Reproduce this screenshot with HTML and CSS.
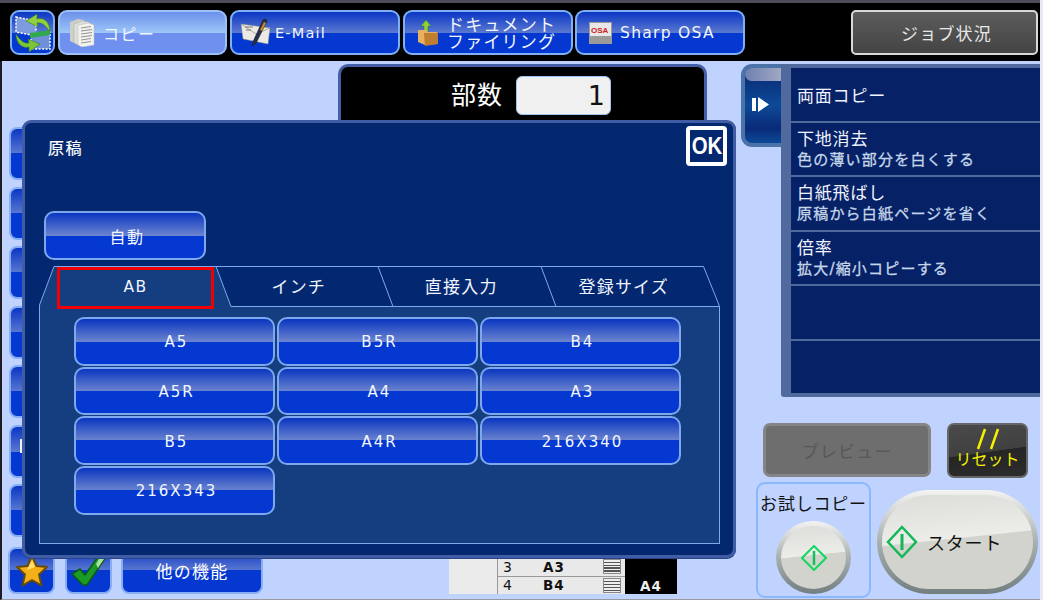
FILE: index.html
```html
<!DOCTYPE html>
<html lang="ja">
<head>
<meta charset="utf-8">
<title>コピー</title>
<link rel="stylesheet" href="styles.css">
</head>
<body>
<div class="app">
  <header class="topbar">
    <button class="nav swap">
      <svg width="41" height="41" viewBox="0 0 41 41">
        <path d="M4 5 L24 9 V24 L4 20Z" fill="#7f9be0" stroke="#fff" stroke-width="1.5" stroke-dasharray="2 1.5"/>
        <path d="M19 22 L38 20 V37 L19 37Z" fill="#6f8fd8" stroke="#fff" stroke-width="1.5" stroke-dasharray="2 1.5"/>
        <path d="M18 21 L38 18 V23 L18 26Z" fill="#2fa84e"/>
        <path d="M38 20 C38 9 31 5 25 7 L25 2 L14 9 L26 15 L25 11 C30 10 34 14 38 20Z" fill="#8fd03c" stroke="#2f7a2a" stroke-width=".6"/>
        <path d="M4 22 C4 32 11 37 17 35 L17 40 L28 32 L16 27 L17 31 C12 32 8 28 4 22Z" fill="#7cc534" stroke="#2f7a2a" stroke-width=".6"/>
      </svg>
    </button>
    <button class="nav app-btn active">
      <svg class="ico ico-copy" width="25" height="28" viewBox="0 0 25 28">
        <path d="M0 3 L8 0 L14 1 V22 L4 24 L0 22Z" fill="#cfcfca"/>
        <path d="M4 5 L12 2 L19 3 V24 L8 26 L4 24Z" fill="#dededa" stroke="#a8a8a4" stroke-width=".5"/>
        <path d="M8 6 L19 4 L24 6 V26 L12 28 L8 26Z" fill="#f2f2ee" stroke="#b8b8b4" stroke-width=".5"/>
        <path d="M11 9 L21 7.500 M11 12 L22 10.500 M11 15 L22 13.500 M11 18 L22 16.500 M11 21 L21 19.500 M11 24 L21 22.500" stroke="#888" stroke-width=".9"/>
      </svg>
      <span class="lbl lbl-copy">コピー</span>
    </button>
    <button class="nav app-btn">
      <svg class="ico ico-mail" width="30" height="27" viewBox="0 0 30 27">
        <path d="M0 5 L29 9 L27 25 L2 20Z" fill="#eceae2" stroke="#8a8a80" stroke-width=".5"/>
        <path d="M0 5 L15 15 L29 9" fill="none" stroke="#9a9a90" stroke-width=".8"/>
        <path d="M4 8 H12 M5 11 H10" stroke="#777" stroke-width="1"/>
        <path d="M25 0 L22 1 L12 23 L11 27 L15 24 L26 2Z" fill="#27304a" stroke="#1a2038" stroke-width=".8"/>
        <path d="M23 3 L19 11 L21 12 L25 4Z" fill="#c98a24"/>
      </svg>
      <span class="lbl">E-Mail</span>
    </button>
    <button class="nav app-btn">
      <svg class="ico ico-folder" width="22" height="26" viewBox="0 0 22 26">
        <path d="M9 0 L14 6 H11 V12 H7 V6 H4Z" fill="#8fd03c" stroke="#3a7a2a" stroke-width=".5"/>
        <path d="M1 10 H9 L11 12 H20 V24 L8 25 L1 22Z" fill="#e8b060"/>
        <path d="M7 13 L21 13 V24 L8 26Z" fill="#c07e30"/>
      </svg>
      <span class="lbl lbl-two"><span class="line">ドキュメント</span><span class="line">ファイリング</span></span>
    </button>
    <button class="nav app-btn osa">
      <svg class="ico ico-osa" width="23" height="22" viewBox="0 0 23 22">
        <rect width="23" height="22" fill="#9a9a9a"/>
        <rect x="1" y="1" width="21" height="13" fill="#e8e8e8"/>
        <text x="2" y="11" class="osa-text">OSA</text>
      </svg>
      <span class="lbl lbl-osa">Sharp OSA</span>
    </button>
    <button class="job">ジョブ状況</button>
  </header>

  <main class="main">
    <section class="rail">
      <div class="side-list">
        <div class="side"></div>
        <div class="side"></div>
        <div class="side"></div>
        <div class="side"></div>
        <div class="side"></div>
        <div class="side"><i class="side-mark"></i></div>
        <div class="side"></div>
      </div>
      <div class="shortcuts">
        <button class="short sq">
          <svg width="34" height="34" viewBox="0 0 34 34"><path d="M17 2 L21.5 12 L32 13 L24 20.5 L26.5 31.5 L17 26 L7.5 31.5 L10 20.5 L2 13 L12.500 12Z" fill="#f4b018" stroke="#6a4a08" stroke-width="2" stroke-linejoin="round"/><path d="M17 6 L20 13 L12 16Z" fill="#ffe070"/></svg>
        </button>
        <button class="short sq">
          <svg width="36" height="30" viewBox="0 0 36 30"><path d="M1 18 L9 13 L14 19 L27 1 L35 1 L16 29 L12 29Z" fill="#1c9a28" stroke="#0c5a14" stroke-width="1.500" stroke-linejoin="round"/><path d="M28 3 L33 3 L27 12 L25 8Z" fill="#a8e0a0"/></svg>
        </button>
        <button class="short more">他の機能</button>
      </div>
    </section>

    <section class="center">
      <div class="count">
        <span class="count-label">部数</span>
        <span class="count-box">1</span>
      </div>
      <div class="strip">
        <div class="strip-blank"></div>
        <div class="strip-table">
          <div class="strip-row"><span class="n">3</span><b>A3</b><i class="tray"></i></div>
          <div class="strip-row"><span class="n">4</span><b>B4</b><i class="tray"></i></div>
        </div>
        <div class="strip-out">A4</div>
      </div>
    </section>

    <section class="right">
      <div class="panel">
        <div class="handle">
          <span class="shine"></span>
          <svg width="17" height="15" viewBox="0 0 17 15"><rect x="0" y="1" width="4" height="13" fill="#fff"/><path d="M6 0 L17 7.500 L6 15Z" fill="#fff"/></svg>
        </div>
        <ul class="features">
          <li>両面コピー</li>
          <li>下地消去<small>色の薄い部分を白くする</small></li>
          <li>白紙飛ばし<small>原稿から白紙ページを省く</small></li>
          <li>倍率<small>拡大/縮小コピーする</small></li>
          <li></li>
          <li></li>
        </ul>
      </div>
      <div class="row-a">
        <button class="preview">プレビュー</button>
        <button class="reset">
          <svg width="26" height="22" viewBox="0 0 26 22"><path d="M10 1 L3 21 M23 1 L16 21" stroke="#f4f000" stroke-width="2.500"/></svg>
          <span>リセット</span>
        </button>
      </div>
      <div class="row-b">
        <div class="trial">
          <span class="trial-label">お試しコピー</span>
          <button class="round-btn">
            <span class="face">
              <svg width="26" height="26" viewBox="0 0 26 26"><path d="M13 1 L25 13 L13 25 L1 13Z" fill="none" stroke="#12d860" stroke-width="2"/><path d="M13 6 V20" stroke="#12c058" stroke-width="2.500"/></svg>
            </span>
          </button>
        </div>
        <button class="round-btn start">
          <span class="face">
            <svg width="32" height="34" viewBox="0 0 32 34"><path d="M16 2 L30 17 L16 32 L2 17Z" fill="none" stroke="#12b858" stroke-width="2.500"/><path d="M16 9 V25" stroke="#12b858" stroke-width="3"/></svg>
            <span>スタート</span>
          </span>
        </button>
      </div>
    </section>
  </main>

  <div class="dialog">
    <div class="dlg-head">
      <h1>原稿</h1>
      <button class="ok"><span>OK</span></button>
    </div>
    <button class="btn auto">自動</button>
    <div class="tabs">
      <svg class="tab-art" width="681" height="41" viewBox="0 0 681 41">
        <path d="M.5 41 V39 L15 .5 H177 L192 40.500 H680.500 V41Z" fill="#143e80"/>
        <path d="M.5 41 V39 L15 .5 H664.500 L680 39 V41 M177 .5 L192 40.500 H680.500 M339 .5 L354 40.500 M502 .5 L517 40.500" fill="none" stroke="#7da8ee" stroke-width="1"/>
      </svg>
      <div class="tab-labels">
        <span class="tab current">AB</span>
        <span class="tab">インチ</span>
        <span class="tab">直接入力</span>
        <span class="tab">登録サイズ</span>
      </div>
    </div>
    <div class="sizes">
      <button class="btn">A5</button>
      <button class="btn">B5R</button>
      <button class="btn">B4</button>
      <button class="btn">A5R</button>
      <button class="btn">A4</button>
      <button class="btn">A3</button>
      <button class="btn">B5</button>
      <button class="btn">A4R</button>
      <button class="btn">216X340</button>
      <button class="btn">216X343</button>
    </div>
  </div>
</div>
</body>
</html>
```
FILE: styles.css
```css
* { box-sizing: border-box; }
html, body { margin: 0; height: 100%; }
body { background: #e6e8f2; overflow: hidden; }
button { font: inherit; padding: 0; cursor: default; }
h1, ul { margin: 0; padding: 0; }

.app {
  position: relative;
  width: 1040px;
  height: 600px;
  display: flex;
  flex-direction: column;
  font-family: "DejaVu Sans", "Noto Sans CJK JP", sans-serif;
  color: #fff;
  border-top: 3px solid #4c4c58;
}

/* top bar */
.topbar {
  height: 58px;
  flex: none;
  background: #000;
  display: flex;
  align-items: flex-start;
  gap: 3px;
  padding: 7px 2px 0 10px;
}
.nav {
  height: 45px;
  border: 2px solid #7fb0f4;
  border-radius: 9px;
  color: #f2f6ff;
  background: linear-gradient(#0a36c4 0, #5a78d0 50%, #0438d0 50%, #0438d0 100%);
  display: flex;
  align-items: center;
}
.swap { width: 45px; justify-content: center; }
.app-btn { width: 170px; }
.active {
  width: 169px;
  background: linear-gradient(#6d90ea 0, #9cc6f8 50%, #7090f0 50%, #7090f0 100%);
  border-color: #9cc0f8;
}
.osa { margin-left: -1px; }
.ico { flex: none; }
.ico-copy { margin-left: 10px; margin-right: 8px; }
.ico-mail { margin-left: 9px; margin-right: 4px; }
.ico-folder { margin-left: 12px; margin-right: 8px; }
.ico-osa { margin-left: 12px; margin-right: 8px; }
.osa-text { font: 700 8px "Liberation Sans", sans-serif; fill: #d02020; }
.lbl { font-size: 14.500px; letter-spacing: 1.200px; white-space: nowrap; }
.lbl-copy { font-size: 16px; letter-spacing: 1.500px; }
.lbl-two {
  font-size: 17px;
  letter-spacing: 1.200px;
  text-align: left;
  padding-top: 2px;
  display: flex;
  flex-direction: column;
}
.line { display: block; height: 17px; line-height: 17px; }
.lbl-osa { font-size: 15.500px; letter-spacing: 1.300px; }
.job {
  margin-left: auto;
  width: 187px;
  height: 45px;
  border: 2px solid #d8d8d8;
  border-radius: 5px;
  background: linear-gradient(#5c5c5c, #444);
  color: #e8e8e8;
  font-size: 17px;
  letter-spacing: 1.200px;
  padding-left: 4px;
}

/* main area */
.main {
  flex: 1;
  min-height: 0;
  background: #c0d3fe;
  border-left: 2px solid #1c1c22;
  border-bottom: 1px solid #9a9aa0;
  display: flex;
}
.rail {
  width: 336px;
  flex: none;
  padding: 66px 0 0 6px;
}
.side-list {
  margin-left: 1px;
  display: grid;
  grid-auto-rows: 53px;
  row-gap: 6.500px;
}
.side {
  width: 100px;
  border: 2px solid #87aef4;
  border-radius: 8px;
  background: linear-gradient(#0a36c4 0, #5a78d0 50%, #0438d0 50%, #0438d0 100%);
  padding-top: 12px;
  padding-left: 9px;
}
.side-mark { display: block; width: 4px; height: 14px; background: #eee; }
.shortcuts {
  display: flex;
  gap: 10px;
  margin-top: 10px;
  height: 47px;
}
.short {
  border: 2px solid #87aef4;
  border-radius: 8px;
  color: #fff;
  background: linear-gradient(#0a36c4 0, #5a78d0 50%, #0438d0 50%, #0438d0 100%);
  display: flex;
  align-items: center;
  justify-content: center;
}
.sq { width: 47px; }
.short svg { flex: none; }
.more { width: 142px; margin-left: -1px; font-size: 17px; letter-spacing: 1.200px; }

/* centre */
.center {
  width: 369px;
  flex: none;
  display: flex;
  flex-direction: column;
}
.count {
  margin-top: 3px;
  height: 70px;
  background: #000;
  border: 3px solid #455fa6;
  border-bottom: 0;
  border-radius: 10px 10px 0 0;
  display: flex;
  align-items: flex-start;
  padding: 9px 0 0 110px;
}
.count-label { font-size: 25px; line-height: 39px; letter-spacing: 1px; width: 65px; flex: none; }
.count-box {
  width: 95px;
  height: 39px;
  border: 1px solid #9cc4ee;
  border-radius: 6px;
  background: #f0f0f0;
  color: #111;
  font-size: 27px;
  line-height: 37px;
  text-align: right;
  padding-right: 5px;
}
.strip {
  margin: 424px 0 0 111px;
  width: 228px;
  height: 36px;
  display: flex;
  color: #111;
}
.strip-blank { width: 49px; background: #ebebeb; border-right: 1px solid #999; flex: none; }
.strip-table { width: 127px; flex: none; background: #e9e9e9; display: flex; flex-direction: column; }
.strip-row {
  flex: 1;
  display: flex;
  align-items: center;
  padding-left: 5px;
  font-size: 14px;
  border-bottom: 1px solid #999;
}
.strip-row:last-child { border-bottom: 0; }
.n { width: 40px; flex: none; }
.strip-row b { width: 60px; flex: none; font-weight: 700; font-size: 13.500px; letter-spacing: 1px; }
.tray {
  width: 18px;
  height: 15px;
  background: repeating-linear-gradient(#eee 0, #eee 1.500px, #555 1.500px, #555 3px);
  border: 1px solid #888;
}
.strip-out {
  flex: 1;
  background: #000;
  color: #eee;
  font-size: 13.500px;
  font-weight: 700;
  letter-spacing: 1px;
  text-align: center;
  padding-top: 20px;
}

/* right column */
.right {
  margin-left: 34px;
  width: 299px;
  flex: none;
}
.panel {
  margin-top: 3px;
  height: 333px;
  display: flex;
  align-items: flex-start;
}
.handle {
  width: 40px;
  height: 83px;
  flex: none;
  border: 4px solid #4c72aa;
  border-right: 0;
  border-radius: 11px 0 0 11px;
  background: linear-gradient(#0a2670, #0c4a98 50%, #0a2a78 80%, #0c4a98);
  display: flex;
  flex-direction: column;
  align-items: center;
}
.handle svg { margin-top: 16px; margin-left: -6px; }
.shine {
  align-self: stretch;
  height: 13px;
  background: linear-gradient(90deg, #6f80b0, #a0a8c4);
  border-radius: 7px 0 0 7px;
}
.features {
  flex: 1;
  height: 333px;
  list-style: none;
  background: #506a9e;
  padding: 4px 0 3px 10px;
  display: grid;
  grid-auto-rows: 52.500px;
  row-gap: 2px;
  border-radius: 0 0 0 3px;
}
.features li {
  background: #062166;
  padding: 2px 0 0 6px;
  display: flex;
  flex-direction: column;
  justify-content: center;
  font-size: 17px;
  line-height: 21px;
  letter-spacing: .8px;
  color: #f0f4ff;
}
.features li:first-child { padding-top: 5px; }
.features small {
  font-size: 15px;
  letter-spacing: 1.200px;
  color: #c4d6e8;
  -webkit-text-stroke: .3px #c4d6e8;
}
.row-a {
  display: flex;
  align-items: flex-start;
  gap: 16px;
  margin: 26px 0 0 22px;
}
.preview {
  width: 168px;
  height: 54px;
  border: 3px solid #858585;
  border-radius: 7px;
  background: #6e6e6e;
  color: #585858;
  font-size: 17px;
  letter-spacing: 1.200px;
}
.reset {
  width: 81px;
  height: 55px;
  border: 2px solid #666;
  border-radius: 7px;
  background: linear-gradient(172deg, #4a4a4a 0, #404040 52%, #262626 53%, #2c2c2c 100%);
  color: #f4f000;
  font-size: 16px;
  line-height: 20px;
  display: flex;
  flex-direction: column;
  align-items: center;
  white-space: nowrap;
}
.reset svg { margin-top: 3px; flex: none; }
.row-b {
  display: flex;
  align-items: flex-start;
  gap: 6px;
  margin: 4px 0 0 15px;
}
.trial {
  width: 115px;
  height: 116px;
  border: 2px solid #8ab8ff;
  border-radius: 9px;
  display: flex;
  flex-direction: column;
  align-items: center;
  color: #111;
}
.trial-label {
  font-size: 17px;
  line-height: 20px;
  margin-top: 10px;
  letter-spacing: .8px;
  white-space: nowrap;
}
.round-btn {
  width: 75px;
  height: 73px;
  margin-top: 7px;
  border: 0;
  border-radius: 50%;
  padding: 5px;
  background: linear-gradient(#f4f4f2, #a8b0b0 50%, #727e80);
  flex: none;
}
.face {
  height: 100%;
  border-radius: inherit;
  background: linear-gradient(174deg, #dcdcd8 0, #ecece8 46%, #d2d3cc 47%, #d2d3cc 100%);
  display: flex;
  align-items: center;
  justify-content: center;
}
.start {
  width: 161px;
  height: 104px;
  margin-top: 8px;
  border-radius: 52px;
}
.start .face {
  justify-content: flex-start;
  padding-left: 4px;
  gap: 9px;
  color: #111;
  font-size: 18px;
  letter-spacing: .8px;
}
.start svg { flex: none; }

/* dialog */
.dialog {
  position: absolute;
  left: 22px;
  top: 117px;
  width: 714px;
  height: 438px;
  background: #04286f;
  border: 3px solid #3f5ca5;
  border-radius: 9px;
  padding: 3px 13px 0 14px;
  box-shadow: 0 1px 0 #2a4488;
}
.dlg-head {
  height: 40px;
  display: flex;
  justify-content: space-between;
  align-items: flex-start;
}
.dlg-head h1 {
  font-size: 16px;
  font-weight: 400;
  line-height: 20px;
  margin: 13px 0 0 9px;
  letter-spacing: 1.500px;
  -webkit-text-stroke: .2px #fff;
}
.ok {
  width: 41px;
  height: 40px;
  margin-right: -7px;
  border: 4px solid #fff;
  border-radius: 4px;
  background: #04286f;
  color: #fff;
  font: 700 24px/1 "Liberation Sans", sans-serif;
}
.ok span { display: inline-block; transform: translateX(-1px) scaleX(.85); }
.btn {
  border: 2px solid #7da8ee;
  border-radius: 10px;
  color: #f2f6ff;
  font-size: 15px;
  letter-spacing: 2px;
  padding: 2px 0 0 4px;
  background: linear-gradient(#0a36c0 0, #6b84cf 50%, #0438d0 50%, #0438d0 100%);
}
.auto {
  display: block;
  width: 162px;
  height: 49px;
  margin: 45px 0 0 5px;
  padding: 0 0 0 4px;
  font-size: 16px;
  letter-spacing: 1.500px;
}
.tabs { margin-top: 6px; height: 41px; display: grid; }
.tab-art { grid-area: 1 / 1; display: block; }
.tab-labels {
  grid-area: 1 / 1;
  height: 41px;
  padding-left: 16px;
  display: grid;
  grid-template-columns: repeat(4, 162.500px);
}
.tab {
  display: flex;
  align-items: center;
  justify-content: center;
  padding-bottom: 5px;
  font-size: 17px;
  letter-spacing: 1.200px;
  color: #f0f4ff;
}
.current {
  position: relative;
  z-index: 1;
  width: 157px;
  height: 42px;
  margin: 1px 0 0 2px;
  border: 3px solid #f00000;
  padding-bottom: 3px;
  font-size: 15.500px;
  letter-spacing: 1.500px;
}
.sizes {
  height: 238px;
  margin-top: -1px;
  background: #143e80;
  border: 1px solid #7da8ee;
  border-top: 0;
  padding: 11px 0 0 34px;
  display: grid;
  grid-template-columns: repeat(3, 201px);
  grid-auto-rows: 48.500px;
  column-gap: 2px;
  row-gap: 1.200px;
}
```
